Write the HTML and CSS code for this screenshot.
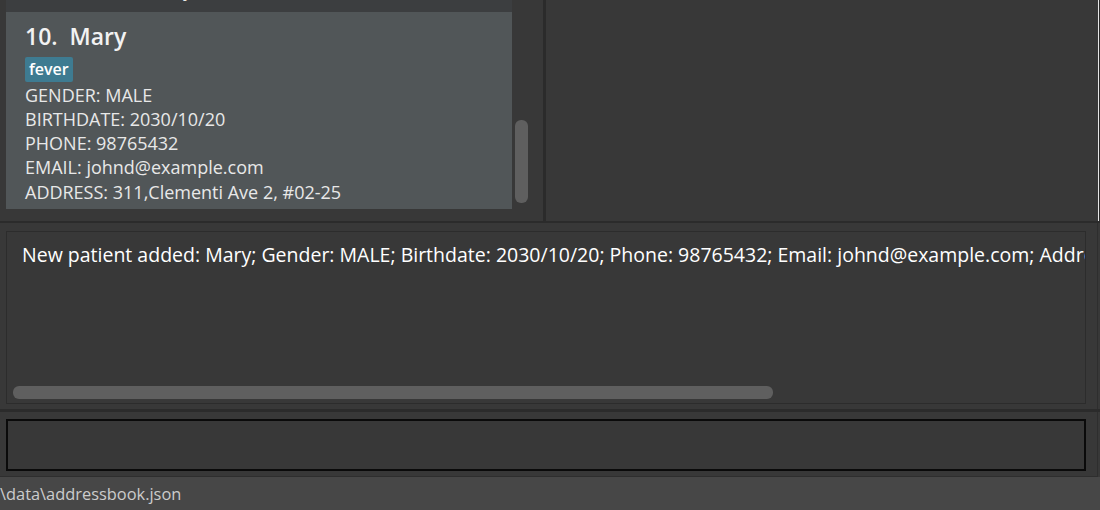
FILE: index.html
```html
<!DOCTYPE html>
<html lang="en">
<head>
<meta charset="utf-8">
<title>Patient list</title>
<link rel="stylesheet" href="styles.css">
</head>
<body>
<div class="app">
  <div class="top">
    <div class="list-panel">
      <div class="list-viewport">
        <div class="card card-alt">
          <div class="card-title">9.&nbsp; Roy Balakrishnan</div>
          <div class="tags"><span class="tag">colleagues</span></div>
          <div class="field">GENDER: MALE</div>
          <div class="field">BIRTHDATE: 2001/01/01</div>
          <div class="field">PHONE: 92624417</div>
          <div class="field">EMAIL: royb@example.com</div>
          <div class="field">ADDRESS: Blk 45 Aljunied Street 85, #11-31</div>
        </div>
        <div class="card">
          <div class="card-title">10.&nbsp; Mary</div>
          <div class="tags"><span class="tag">fever</span></div>
          <div class="field">GENDER: MALE</div>
          <div class="field">BIRTHDATE: 2030/10/20</div>
          <div class="field">PHONE: 98765432</div>
          <div class="field">EMAIL: johnd@example.com</div>
          <div class="field">ADDRESS: 311,Clementi Ave 2, #02-25</div>
        </div>
      </div>
      <div class="vscroll"><div class="vthumb"></div></div>
    </div>
    <div class="vdivider"></div>
    <div class="right-panel"></div>
  </div>
  <div class="hdivider"></div>
  <div class="result-pane">
    <div class="result-box">
      <div class="result-text">New patient added: Mary; Gender: MALE; Birthdate: 2030/10/20; Phone: 98765432; Email: johnd@example.com; Address: 311,Clementi Ave 2, #02-25; Tags: [fever]</div>
      <div class="hscroll"><div class="hthumb"></div></div>
    </div>
  </div>
  <div class="hdivider hdivider-thick"></div>
  <div class="command-pane">
    <div class="command-box"></div>
  </div>
  <div class="status">\data\addressbook.json</div>
</div>
</body>
</html>
```
FILE: styles.css
```css
* { box-sizing: border-box; }
html, body { margin: 0; padding: 0; background: #383838; }
body { width: 1100px; height: 510px; overflow: hidden; font-family: "Open Sans", "Noto Sans", sans-serif; }

.app { display: flex; flex-direction: column; width: 1100px; height: 510px; }

.top { display: flex; height: 221px; background: #2b2b2b; padding-right: 1px; }

.list-panel { display: flex; flex: none; width: 543px; background: #383838; padding-left: 6px; }
.list-viewport {
  flex: none; width: 506px; height: 100%; overflow: hidden;
  display: flex; flex-direction: column; justify-content: flex-end;
  padding-bottom: 12px;
}
.card { flex: none; background: #515658; padding: 9px 0 5px 19px; color: #e8e8e8; white-space: nowrap; }
.card-alt { background: #3c3e40; padding-bottom: 9px; }
.card-title { font-size: 23px; font-weight: 600; color: #f2f2f2; line-height: 30px; }
.tags { display: flex; padding: 6px 0 1px; }
.tag { background: #3e7b91; color: #ffffff; font-size: 16px; font-weight: 600; line-height: 25px; padding: 0 4px; border-radius: 2px; }
.field { font-size: 18px; line-height: 24.3px; }

.vscroll { flex: none; width: 31px; padding: 120px 0 0 3px; }
.vthumb { width: 13px; height: 83px; background: #5f5f5f; border-radius: 6px; }

.vdivider { flex: none; width: 3px; background: #2b2b2b; }
.right-panel { flex: 1; background: #383838; border-right: 1px solid #e6e6e6; }

.hdivider { height: 2px; background: #2b2b2b; }
.hdivider-thick { height: 3px; }

.result-pane { height: 186px; padding: 8px 11px 5px 6px; border-right: 1px solid #2e2e2e; margin-right: 2px; }
.result-box { height: 173px; border: 1px solid #2c2c2c; display: flex; flex-direction: column; overflow: hidden; }
.result-text { flex: 1; padding: 9px 0 0 15px; white-space: nowrap; overflow: hidden; color: #ffffff; font-size: 19.5px; }
.hscroll { height: 18px; padding: 1px 0 4px 6px; }
.hthumb { width: 760px; height: 13px; background: #5f5f5f; border-radius: 6px; }

.command-pane { height: 65px; padding: 7px 11px 6px 6px; border-right: 1px solid #2e2e2e; margin-right: 2px; border-bottom: 1px solid #2e2e2e; }
.command-box { height: 52px; border: 2px solid #0a0a0a; background: #383838; }

.status { flex: 1; background: #474747; color: #cccccc; font-size: 16.4px; line-height: 33px; padding-left: 0; white-space: nowrap; }
```
